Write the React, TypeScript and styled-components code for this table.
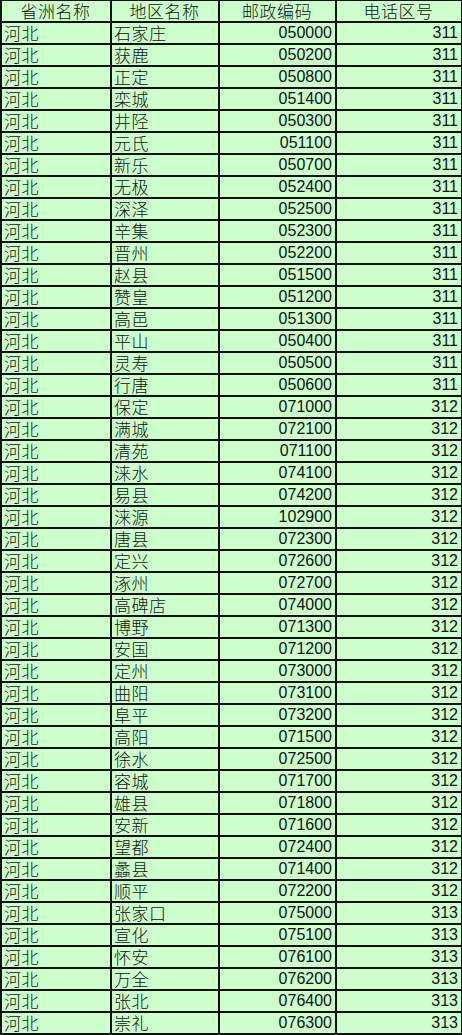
import React from "react";
import styled, { createGlobalStyle } from "styled-components";

const Global = createGlobalStyle`
  html, body { margin: 0; padding: 0; background: #ffffff; }
`;

type Row = [string, string, string, string];

const r311 = "石家庄,050000 获鹿,050200 正定,050800 栾城,051400 井陉,050300 元氏,051100 新乐,050700 无极,052400 深泽,052500 辛集,052300 晋州,052200 赵县,051500 赞皇,051200 高邑,051300 平山,050400 灵寿,050500 行唐,050600";
const r312 = "保定,071000 满城,072100 清苑,071100 涞水,074100 易县,074200 涞源,102900 唐县,072300 定兴,072600 涿州,072700 高碑店,074000 博野,071300 安国,071200 定州,073000 曲阳,073100 阜平,073200 高阳,071500 徐水,072500 容城,071700 雄县,071800 安新,071600 望都,072400 蠡县,071400 顺平,072200";
const r313 = "张家口,075000 宣化,075100 怀安,076100 万全,076200 张北,076400 崇礼,076300";

const build = (s: string, code: string): Row[] =>
  s.split(" ").map((p) => {
    const [name, zip] = p.split(",");
    return ["河北", name, zip, code];
  });

const rows: Row[] = [...build(r311, "311"), ...build(r312, "312"), ...build(r313, "313")];

const Sheet = styled.div`
  display: grid;
  grid-template-columns: 110px 108px 117px 126px;
  grid-auto-rows: 22px;
  width: 462px;
  box-sizing: border-box;
  border-top: 1px solid #111;
  border-left: 2px solid #111;
  background: #ccffcc;
`;

const Cell = styled.div<{ $align: "left" | "center" | "right"; $num?: boolean }>`
  box-sizing: border-box;
  border-right: 2px solid #111;
  border-bottom: 2px solid #111;
  display: flex;
  align-items: center;
  justify-content: ${(p) => (p.$align === "left" ? "flex-start" : p.$align === "right" ? "flex-end" : "center")};
  padding: 0 3px 0 2px;
  white-space: nowrap;
  color: #111;
  font-family: ${(p) => (p.$num ? '"Liberation Sans", Arial, sans-serif' : '"Noto Sans CJK SC", sans-serif')};
  font-size: ${(p) => (p.$num ? "16px" : "17px")};
  font-weight: ${(p) => (p.$num ? 400 : 300)};
  line-height: 18px;
  letter-spacing: ${(p) => (p.$num ? "0" : "0.5px")};
`;

const headers = ["省洲名称", "地区名称", "邮政编码", "电话区号"];

export default function App() {
  return (
    <>
      <Global />
      <Sheet>
        {headers.map((h) => (
          <Cell key={h} $align="center">{h}</Cell>
        ))}
        {rows.map((r, i) => (
          <React.Fragment key={i}>
            <Cell $align="left">{r[0]}</Cell>
            <Cell $align="left">{r[1]}</Cell>
            <Cell $align="right" $num>{r[2]}</Cell>
            <Cell $align="right" $num>{r[3]}</Cell>
          </React.Fragment>
        ))}
      </Sheet>
    </>
  );
}
